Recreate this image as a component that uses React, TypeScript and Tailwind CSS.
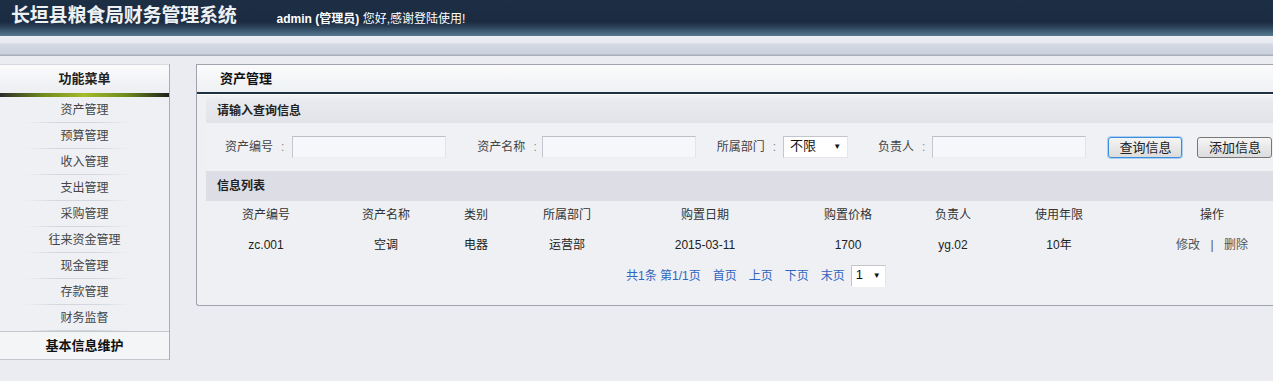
import React from "react";

const menuItems = ["资产管理", "预算管理", "收入管理", "支出管理", "采购管理", "往来资金管理", "现金管理", "存款管理", "财务监督"];

const columns = [
  { title: "资产编号", w: "w-[120px]" },
  { title: "资产名称", w: "w-[120px]" },
  { title: "类别", w: "w-[60px]" },
  { title: "所属部门", w: "w-[122px]" },
  { title: "购置日期", w: "w-[154px]" },
  { title: "购置价格", w: "w-[132px]" },
  { title: "负责人", w: "w-[78px]" },
  { title: "使用年限", w: "w-[134px]" },
];

const rows = [
  { no: "zc.001", name: "空调", type: "电器", dept: "运营部", date: "2015-03-11", price: "1700", owner: "yg.02", years: "10年" },
];

function Label({ text }: { text: string }) {
  return (
    <>
      <span className="text-[12px] text-[#444] whitespace-nowrap">{text}</span>
      <span className="ml-[8px] text-[12px] text-[#888]">:</span>
    </>
  );
}

function Field({ label, width, gap }: { label: string; width: string; gap: string }) {
  return (
    <div className="flex items-center">
      <Label text={label} />
      <input
        readOnly
        className={`${gap} ${width} h-[22px] bg-[#f6f7fa] border border-t-[#bcc0c6] border-l-[#c4c7cd] border-r-[#e2e4e8] border-b-[#eceef1] outline-none`}
      />
    </div>
  );
}

export default function App() {
  return (
    <div
      className="w-[1273px] h-[381px] overflow-hidden bg-[#eaecf1] text-[#333]"
      style={{ fontFamily: '"Liberation Sans", Arial, "Noto Sans CJK SC", sans-serif' }}
    >
      {/* top bar */}
      <div className="h-[36px] flex items-center bg-[linear-gradient(to_bottom,#1d2f45_0px,#1b2c42_22px,#2a4258_27px,#476780_33px,#587a8f_36px)]">
        <div className="pl-[11px] -mt-[3px] text-[19px] font-bold text-[#eef1f3] tracking-[-0.2px]">长垣县粮食局财务管理系统</div>
        <div className="ml-[40px] mt-[1px] text-[12px] text-white">
          <span className="font-bold">admin</span> <span className="font-bold">(管理员)</span> 您好,感谢登陆使用!
        </div>
      </div>
      <div className="h-[20px] bg-[linear-gradient(to_bottom,#eef0f6_0px,#e6e9f0_7px,#d4d9e3_8px,#ccd2dd_18px,#a9b0bd_19px,#a9b0bd_20px)]" />

      <div className="flex pt-[8px]">
        {/* sidebar */}
        <div className="w-[170px] shrink-0 border-r border-[#a9adb6] bg-[#eef0f4]">
          <div className="h-[29px] flex items-center justify-center text-[13px] font-bold text-[#222] bg-[linear-gradient(to_bottom,#fbfbfc,#eceef2)] border-t border-[#d6d9df] rounded-tr-[3px]">
            功能菜单
          </div>
          <div className="h-[4px] bg-[linear-gradient(to_right,#2b2b2b,#6d8a1c_25%,#a4bb2a_50%,#6d8a1c_75%,#1e1e1e)]" />
          {menuItems.map((m) => (
            <div key={m} className="h-[26px] flex flex-col items-center justify-center relative">
              <span className="text-[12px] text-[#444]">{m}</span>
              <div className="absolute bottom-0 left-[25px] right-[40px] h-px bg-[linear-gradient(to_right,transparent,#d3d6dc_30%,#d3d6dc_70%,transparent)]" />
            </div>
          ))}
          <div className="h-[29px] flex items-center justify-center text-[13px] font-bold text-[#111] bg-[#f4f5f7] border-t border-b border-[#c3c7cf]">
            基本信息维护
          </div>
        </div>

        {/* main panel */}
        <div className="ml-[26px] flex-1 h-[242px] border border-r-0 border-[#9ea3ad] rounded-bl-[3px] bg-[#eef0f4]">
          <div className="h-[27px] flex items-center pl-[23px] text-[13px] font-bold text-[#111] bg-[linear-gradient(to_bottom,#fbfbfc,#eef0f3)]">
            资产管理
          </div>
          <div className="h-[2px] bg-[#1f3042]" />
          <div className="h-px bg-white" />

          <div className="pl-[9px] pt-[3px]">
            <div className="h-[25px] flex items-center pl-[11px] text-[12px] font-bold text-[#222] bg-[linear-gradient(to_bottom,#e9ebf0,#e1e3e9)]">
              请输入查询信息
            </div>

            <div className="h-[48px] flex items-center bg-[#f0f1f5]">
              <div className="pl-[19px]">
                <Field label="资产编号" width="w-[154px]" gap="ml-[8px]" />
              </div>
              <div className="pl-[31px]">
                <Field label="资产名称" width="w-[154px]" gap="ml-[5px]" />
              </div>
              <div className="pl-[21px] flex items-center">
                <Label text="所属部门" />
                <div className="ml-[7px] w-[65px] h-[22px] flex items-center justify-between px-[6px] bg-white border border-t-[#c2c5cb] border-l-[#c2c5cb] border-r-[#e4e6ea] border-b-[#e4e6ea] text-[13px] text-[#111]">
                  <span className="-mt-[3px]">不限</span>
                  <span className="text-[8px]">▼</span>
                </div>
              </div>
              <div className="pl-[30px]">
                <Field label="负责人" width="w-[154px]" gap="ml-[7px]" />
              </div>
              <button className="ml-[22px] w-[74px] h-[21px] rounded-[3px] border border-[#3c8edc] shadow-[0_0_0_1px_#a9d0f3] bg-[linear-gradient(to_bottom,#f5f5f5,#dcdcdc)] text-[13px] text-[#222] leading-none">
                查询信息
              </button>
              <button className="ml-[15px] w-[75px] h-[21px] rounded-[3px] border border-[#777] bg-[linear-gradient(to_bottom,#f5f5f5,#dcdcdc)] text-[13px] text-[#222] leading-none">
                添加信息
              </button>
            </div>

            <div className="h-[30px] flex items-center pl-[11px] text-[12px] font-bold text-[#222] bg-[#dcdde5]">
              信息列表
            </div>

            <div className="h-[28px] flex items-center text-[12px] text-[#333]">
              {columns.map((c) => (
                <div key={c.title} className={`${c.w} text-center`}>{c.title}</div>
              ))}
              <div className="w-[148px] pl-[24px] text-center">操作</div>
            </div>
            {rows.map((r) => (
              <div key={r.no} className="h-[32px] flex items-center text-[12px] text-[#222]">
                <div className="w-[120px] text-center">{r.no}</div>
                <div className="w-[120px] text-center">{r.name}</div>
                <div className="w-[60px] text-center">{r.type}</div>
                <div className="w-[122px] text-center">{r.dept}</div>
                <div className="w-[154px] text-center">{r.date}</div>
                <div className="w-[132px] text-center">{r.price}</div>
                <div className="w-[78px] text-center">{r.owner}</div>
                <div className="w-[134px] text-center">{r.years}</div>
                <div className="w-[148px] pl-[24px] text-center text-[#555]">
                  修改 <span className="mx-[7px]">|</span> 删除
                </div>
              </div>
            ))}

            <div className="h-[30px] flex items-center pl-[420px] text-[12px] text-[#2f64c0]">
              <span>共1条 第1/1页</span>
              <span className="ml-[12px]">首页</span>
              <span className="ml-[12px]">上页</span>
              <span className="ml-[12px]">下页</span>
              <span className="ml-[12px]">末页</span>
              <div className="ml-[6px] w-[35px] h-[22px] flex items-center justify-between px-[4px] bg-white border border-t-[#c2c5cb] border-l-[#c2c5cb] border-r-[#e4e6ea] border-b-transparent text-[13px] text-[#111]">
                <span className="-mt-[3px]">1</span>
                <span className="text-[8px]">▼</span>
              </div>
            </div>
          </div>
        </div>
      </div>
    </div>
  );
}
